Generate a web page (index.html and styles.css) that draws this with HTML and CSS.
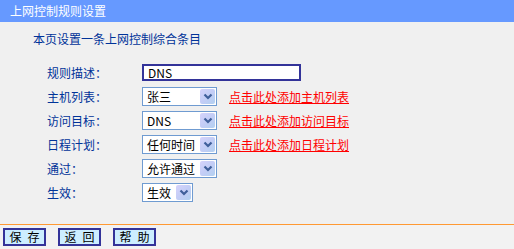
FILE: index.html
```html
<!DOCTYPE html>
<html lang="zh-CN">
<head>
    <meta charset="UTF-8">
    <meta name="viewport" content="width=device-width, initial-scale=1.0">
    <title>上网控制规则设置</title>
    <link rel="stylesheet" href="styles.css">
</head>
<body>
    <div class="title">上网控制规则设置</div>
    <div class="intro">本页设置一条上网控制综合条目</div>

    <div class="form">
        <div class="label">规则描述：</div>
        <div class="field">
            <input class="text-input" type="text" value="DNS">
        </div>

        <div class="label">主机列表：</div>
        <div class="field">
            <div class="select">
                <span class="select-text">张三</span>
                <span class="select-arrow"><svg width="10" height="7" viewBox="0 0 10 7"><polyline points="1.5,1.5 5,5 8.5,1.5" fill="none" stroke="#3f5f9a" stroke-width="2.2"/></svg></span>
            </div>
            <a class="link" href="#">点击此处添加主机列表</a>
        </div>

        <div class="label">访问目标：</div>
        <div class="field">
            <div class="select">
                <span class="select-text">DNS</span>
                <span class="select-arrow"><svg width="10" height="7" viewBox="0 0 10 7"><polyline points="1.5,1.5 5,5 8.5,1.5" fill="none" stroke="#3f5f9a" stroke-width="2.2"/></svg></span>
            </div>
            <a class="link" href="#">点击此处添加访问目标</a>
        </div>

        <div class="label">日程计划：</div>
        <div class="field">
            <div class="select">
                <span class="select-text">任何时间</span>
                <span class="select-arrow"><svg width="10" height="7" viewBox="0 0 10 7"><polyline points="1.5,1.5 5,5 8.5,1.5" fill="none" stroke="#3f5f9a" stroke-width="2.2"/></svg></span>
            </div>
            <a class="link" href="#">点击此处添加日程计划</a>
        </div>

        <div class="label">通过：</div>
        <div class="field">
            <div class="select">
                <span class="select-text">允许通过</span>
                <span class="select-arrow"><svg width="10" height="7" viewBox="0 0 10 7"><polyline points="1.5,1.5 5,5 8.5,1.5" fill="none" stroke="#3f5f9a" stroke-width="2.2"/></svg></span>
            </div>
        </div>

        <div class="label">生效：</div>
        <div class="field">
            <div class="select select-small">
                <span class="select-text">生效</span>
                <span class="select-arrow"><svg width="10" height="7" viewBox="0 0 10 7"><polyline points="1.5,1.5 5,5 8.5,1.5" fill="none" stroke="#3f5f9a" stroke-width="2.2"/></svg></span>
            </div>
        </div>
    </div>

    <div class="footer">
        <button class="button">保&ensp;存</button>
        <button class="button">返&ensp;回</button>
        <button class="button">帮&ensp;助</button>
    </div>
</body>
</html>
```

FILE: styles.css
```css
* {
    box-sizing: border-box;
}
body {
    margin: 0;
    background-color: #f0f0f0;
    font-family: "Noto Sans CJK SC", "Noto Sans", sans-serif;
    font-size: 12px;
}

/* шапка */
.title {
    height: 22px;
    line-height: 22px;
    padding-left: 10px;
    background-color: #6699ff;
    color: #fff;
}
.intro {
    height: 24px;
    line-height: 24px;
    margin-top: 5px;
    padding-left: 33px;
    color: #003399;
}

/* форма */
.form {
    margin-top: 9px;
    padding-left: 47px;
    display: grid;
    grid-template-columns: 95px auto;
    grid-auto-rows: 24px;
    align-items: center;
}
.label {
    color: #003399;
}
.field {
    display: flex;
    align-items: center;
    gap: 12px;
}
.text-input {
    width: 159px;
    height: 17px;
    margin: 0;
    padding: 0 4px;
    border: 2px solid #333399;
    background-color: #fff;
    font-family: inherit;
    font-size: 12px;
    color: #000;
    outline: none;
}
.select {
    width: 75px;
    height: 19px;
    display: flex;
    align-items: center;
    padding: 1px;
    border: 1px solid #6f9bd1;
    background-color: #fff;
}
.select-small {
    width: 51px;
}
.select-text {
    flex: 1;
    padding-left: 3px;
    color: #000;
    white-space: nowrap;
    overflow: hidden;
}
.select-arrow {
    width: 15px;
    height: 15px;
    display: flex;
    align-items: center;
    justify-content: center;
    border-radius: 2px;
    background: linear-gradient(135deg, #d6d3fb 0%, #c3cdf6 50%, #b2d0f0 100%);
}
.link {
    color: #ff0000;
    text-decoration: underline;
    white-space: nowrap;
}

/* низ */
.footer {
    margin-top: 20px;
    border-top: 1px solid #ff9933;
    padding: 3px 0 0 3px;
    display: flex;
    gap: 12px;
    background-color: #f2f2f2;
    height: 25px;
}
.button {
    width: 43px;
    height: 18px;
    margin: 0;
    padding: 0;
    border: 2px solid #333399;
    background-color: #cceeff;
    font-family: inherit;
    font-size: 12px;
    line-height: 14px;
    color: #000;
}
```
